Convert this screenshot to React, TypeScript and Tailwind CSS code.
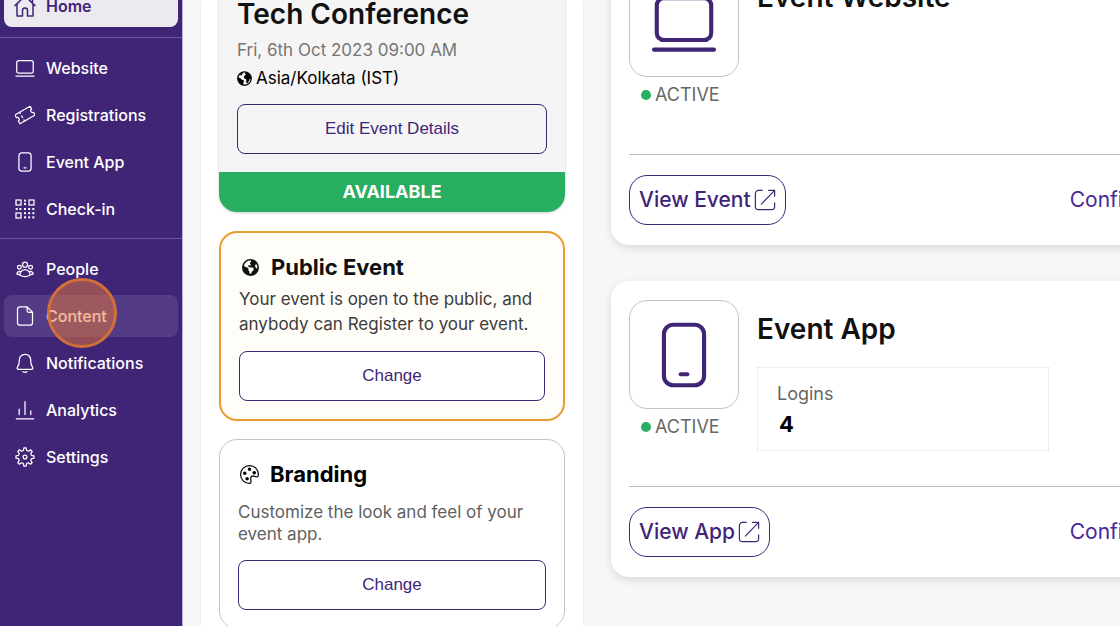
import type { ReactNode } from "react";
import { BsPalette } from "react-icons/bs";
import { FaEarthAmericas } from "react-icons/fa6";
import { HiOutlineUserGroup } from "react-icons/hi2";

type SvgProps = { className?: string; strokeWidth?: number; children: ReactNode };

function Icon({ className = "size-5", strokeWidth = 1.5, children }: SvgProps) {
  return (
    <svg
      viewBox="0 0 24 24"
      fill="none"
      stroke="currentColor"
      strokeWidth={strokeWidth}
      strokeLinecap="round"
      strokeLinejoin="round"
      aria-hidden="true"
      className={`shrink-0 ${className}`}
    >
      {children}
    </svg>
  );
}

function HomeIcon() {
  return (
    <Icon className="size-6">
      <path d="M2 11.6 12 2l10 9.600M4 10v12h5.500v-5.500a2.500 2.500 0 0 1 5 0V22H20V10M17 6.500V3.500h2.500v5.500" />
    </Icon>
  );
}

function LaptopIcon({ className, strokeWidth }: { className?: string; strokeWidth?: number }) {
  return (
    <Icon className={className} strokeWidth={strokeWidth}>
      <path d="M1.100 21.700h21.800" />
      <rect x="2.100" y="3" width="19.800" height="15.200" rx="2.600" />
    </Icon>
  );
}

function TicketIcon() {
  return (
    <Icon>
      <g transform="rotate(-30 12 12)">
        <path d="M1.500 6h21v3.800a2.200 2.200 0 0 0 0 4.400V18h-21v-3.800a2.200 2.200 0 0 0 0-4.400z" />
        <path d="M8 6v1.500M8 11v2M8 16.500V18" />
      </g>
    </Icon>
  );
}

function PhoneIcon({ className, strokeWidth }: { className?: string; strokeWidth?: number }) {
  return (
    <Icon className={className} strokeWidth={strokeWidth}>
      <rect x="4.700" y="1" width="14.600" height="22" rx="3.400" />
      <path d="M10.800 19h2.400" />
    </Icon>
  );
}

const qrDots = [
  [12, 2], [12, 6], [2, 12], [6.5, 12], [12, 12], [17, 12], [22, 12],
  [12, 17], [17, 17], [22, 17], [12, 22], [17, 22], [22, 22],
];

function QrIcon() {
  return (
    <Icon>
      <rect x="1.200" y="1.200" width="6" height="6" strokeLinejoin="miter" />
      <rect x="16.800" y="1.200" width="6" height="6" strokeLinejoin="miter" />
      <rect x="1.200" y="16.800" width="6" height="6" strokeLinejoin="miter" />
      <g fill="currentColor" stroke="none">
        {qrDots.map(([x, y]) => (
          <rect key={`${x}-${y}`} x={x - 1.2} y={y - 1.2} width="2.400" height="2.400" />
        ))}
      </g>
    </Icon>
  );
}

function FileIcon() {
  return (
    <Icon>
      <path d="M14.500 1H6a3 3 0 0 0-3 3v16a3 3 0 0 0 3 3h12a3 3 0 0 0 3-3V7.500zM14.500 1v4.500a2 2 0 0 0 2 2H21" />
    </Icon>
  );
}

function BellIcon() {
  return (
    <Icon>
      <path d="M12 1.500c-4.600 0-6.800 3.500-6.800 7.500 0 4.500-.8 6.300-2.400 8.300-.8 1 .1 2.200 1.300 2.200h15.800c1.200 0 2.100-1.200 1.300-2.200-1.600-2-2.400-3.800-2.400-8.300 0-4-2.200-7.500-6.800-7.500z" />
      <path d="M9.500 22.500c1.400.7 3.600.7 5 0" />
    </Icon>
  );
}

function ChartIcon() {
  return (
    <Icon>
      <path d="M1.500 22.500h21M5 11v6.500M12 2v15.500M19 13v4.500" />
    </Icon>
  );
}

const gearPath = (() => {
  const points: string[] = [];
  for (let tooth = 0; tooth < 8; tooth++) {
    const offsets: [number, number][] = [[-14, 8], [-7.5, 10.9], [7.5, 10.9], [14, 8]];
    for (const [degrees, radius] of offsets) {
      const angle = ((tooth * 45 + degrees) * Math.PI) / 180;
      points.push(`${(12 + radius * Math.sin(angle)).toFixed(2)} ${(12 - radius * Math.cos(angle)).toFixed(2)}`);
    }
  }
  return `M${points.join("L")}Z`;
})();

function GearIcon() {
  return (
    <Icon>
      <path d={gearPath} />
      <circle cx="12" cy="12" r="2.300" />
    </Icon>
  );
}

function GlobeIcon() {
  return (
    <Icon className="size-[15px]" strokeWidth={2}>
      <circle cx="12" cy="12" r="10.800" />
      <path
        fill="currentColor"
        stroke="none"
        d="M1.500 10.500 5 11l2.500 2.500 4 2-1.500 3.500.5 4C5 22.500 1 18 1.500 10.500zM12.500 2l6 1.800 4 5.200.3 4.500-2.300-1.500-1 3.500-3 4-2-1.500.5-4.500-3.500-2-.5-3.500 3-1.500zM4 6.500 9 2.200 9.500 4 7 7z"
      />
    </Icon>
  );
}

function ExternalIcon() {
  return (
    <Icon className="size-[22px]" strokeWidth={1.3}>
      <path d="M9 1.500H5A3.500 3.500 0 0 0 1.500 5v14A3.500 3.500 0 0 0 5 22.500h14a3.500 3.500 0 0 0 3.500-3.500v-4M8 16.500 22 2M16 1.500h6.500V8" />
    </Icon>
  );
}

function NavItem({ icon, label, children, tone = "text-white" }: { icon: ReactNode; label: string; children?: ReactNode; tone?: string }) {
  return (
    <a href="#" className={`relative mx-1 flex h-[42px] shrink-0 items-center gap-[11px] rounded-lg pl-[11px] font-medium ${tone}`}>
      <span className="flex size-5 items-center justify-center">{icon}</span>
      {label}
      {children}
    </a>
  );
}

function Sidebar() {
  return (
    <nav className="flex w-[183px] shrink-0 flex-col border-r border-[#b9aed0] bg-[#402577] text-base leading-5">
      <a href="#" className="mx-1 -mt-[15px] flex h-[42px] shrink-0 items-center gap-[11px] rounded-lg bg-[#ece9f1] pl-[11px] font-semibold text-[#402577]">
        <span className="flex size-5 items-center justify-center"><HomeIcon /></span>
        Home
      </a>
      <hr className="mt-[10px] border-[#6b5596]" />
      <div className="mt-[9px] flex flex-col gap-[5px]">
        <NavItem icon={<LaptopIcon />} label="Website" />
        <NavItem icon={<TicketIcon />} label="Registrations" />
        <NavItem icon={<PhoneIcon />} label="Event App" />
        <NavItem icon={<QrIcon />} label="Check-in" />
      </div>
      <hr className="mt-2 border-[#6b5596]" />
      <div className="mt-[9px] flex flex-col gap-[5px]">
        <NavItem icon={<HiOutlineUserGroup size={20} />} label="People" />
        <NavItem icon={<FileIcon />} label="Content" tone="bg-[#543b85] text-white">
          <span className="absolute -top-[17px] left-[43px] size-[70px] rounded-full border-[3px] border-[#d3703a] bg-[#e8783a]/50" />
        </NavItem>
        <NavItem icon={<BellIcon />} label="Notifications" />
        <NavItem icon={<ChartIcon />} label="Analytics" />
        <NavItem icon={<GearIcon />} label="Settings" />
      </div>
    </nav>
  );
}

function OutlineButton({ children }: { children: ReactNode }) {
  return (
    <button className="block h-[50px] w-full rounded-lg border border-[#402577] font-['Liberation_Sans',sans-serif] text-[17px] text-[#402577]">
      {children}
    </button>
  );
}

function SummaryColumn() {
  return (
    <section className="w-[382px] shrink-0 bg-white px-[18px] shadow-[0_0_4px_rgba(0,0,0,0.06)]">
      <article className="-mt-1 overflow-hidden rounded-b-[18px] bg-[#f5f5f5] shadow-[0_1px_3px_rgba(0,0,0,0.2)]">
        <div className="px-[18px] pb-[18px]">
          <h1 className="text-[28px] leading-9 font-semibold text-[#111]">Tech Conference</h1>
          <p className="mt-1 text-[17px] leading-7 text-[#757575]">Fri, 6th Oct 2023 09:00 AM</p>
          <p className="mb-3 flex items-center gap-1 text-[17px] leading-7 text-black">
            <GlobeIcon /> Asia/Kolkata (IST)
          </p>
          <OutlineButton>Edit Event Details</OutlineButton>
        </div>
        <p className="bg-[#27ae60] text-center text-lg leading-10 font-bold text-white">AVAILABLE</p>
      </article>

      <article className="mt-[19px] rounded-[18px] border-2 border-[#e99c2f] bg-[#fffdf8] p-[18px]">
        <h2 className="flex items-center gap-3 pl-[3px] text-[22px] leading-8 font-bold text-[#111]">
          <FaEarthAmericas size={17} /> Public Event
        </h2>
        <p className="mt-1 text-[17px] leading-[25px] text-[#3c3c3c]">
          Your event is open to the public, and anybody can Register to your event.
        </p>
        <div className="mt-[14px] rounded-lg bg-white">
          <OutlineButton>Change</OutlineButton>
        </div>
      </article>

      <article className="mt-[18px] rounded-[18px] border border-[#c4c4c4] bg-white p-[18px]">
        <h2 className="flex items-center gap-[11px] pl-0.5 text-[22px] leading-8 font-bold text-black">
          <BsPalette size={19} /> Branding
        </h2>
        <p className="mt-[11px] text-[17px] leading-[22px] text-[#5f5f5f]">
          Customize the look and feel of your event app.
        </p>
        <div className="mt-[15px]">
          <OutlineButton>Change</OutlineButton>
        </div>
      </article>
    </section>
  );
}

function ProductCard({ title, icon, action, children }: { title: string; icon: ReactNode; action: string; children?: ReactNode }) {
  return (
    <article className="rounded-[18px] bg-white px-[18px] pt-[19px] pb-5 shadow-[0_3px_8px_rgba(0,0,0,0.12)]">
      <div className="flex min-h-[187px] gap-[18px] border-b border-[#bdbdbd]">
        <div className="w-[110px] shrink-0">
          <div className="flex h-[109px] items-center justify-center rounded-[18px] border border-[#c4c4c4] text-[#402577]">{icon}</div>
          <p className="mt-1 flex items-center gap-1 pl-3 text-lg leading-7 text-[#666]">
            <span className="size-[10px] rounded-full bg-[#27ae60]" /> ACTIVE
          </p>
        </div>
        <div>
          <h2 className="mt-[11px] text-[28px] leading-9 font-semibold text-[#111]">{title}</h2>
          {children}
        </div>
      </div>
      <div className="mt-5 flex items-center justify-between text-[21px]">
        <button className="flex h-[50px] items-center gap-[3px] rounded-[18px] border border-[#402577] px-[9px] font-medium text-[#402577]">
          {action} <ExternalIcon />
        </button>
        <a href="#" className="text-[#47279b]">Configure</a>
      </div>
    </article>
  );
}

export default function App() {
  return (
    <div className="flex h-screen overflow-hidden bg-[#f6f7f9] font-['Inter',sans-serif]">
      <Sidebar />
      <main className="flex min-w-0 flex-1 items-start gap-7 pl-[18px]">
        <SummaryColumn />
        <div className="-mt-[51px] -mr-[66px] flex min-w-0 flex-1 flex-col gap-9">
          <ProductCard title="Event Website" action="View Event" icon={<LaptopIcon className="size-[66px]" strokeWidth={1.5} />} />
          <ProductCard title="Event App" action="View App" icon={<PhoneIcon className="size-[66px]" strokeWidth={1.5} />}>
            <dl className="mt-5 w-[292px] border border-dotted border-[#dedede] px-[19px] pt-3 pb-[10px]">
              <dt className="text-lg leading-7 text-[#666]">Logins</dt>
              <dd className="pl-0.5 text-[22px] leading-8 font-bold text-black">4</dd>
            </dl>
          </ProductCard>
        </div>
      </main>
    </div>
  );
}
